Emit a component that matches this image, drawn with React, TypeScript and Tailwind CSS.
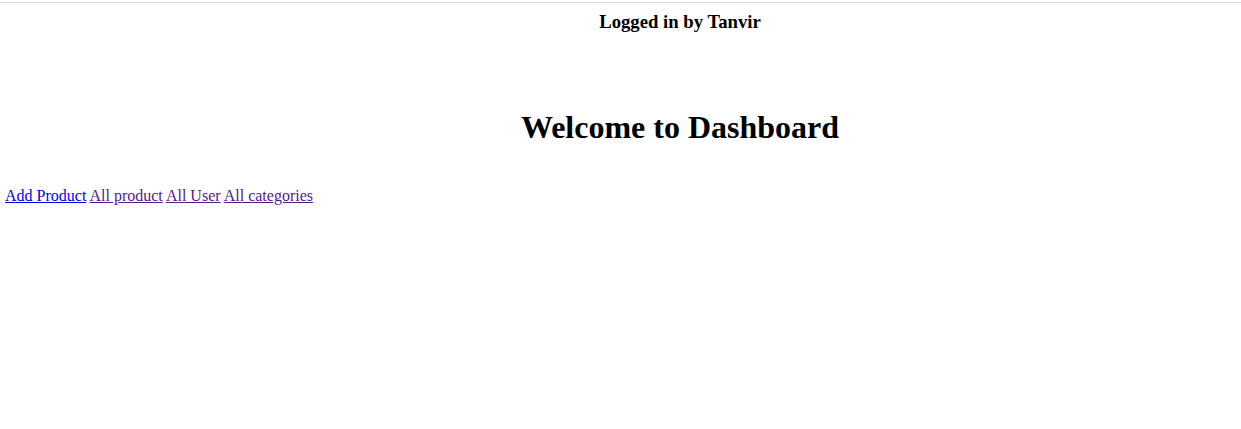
const links = [
    { label: 'Add Product', visited: false },
    { label: 'All product', visited: true },
    { label: 'All User', visited: true },
    { label: 'All categories', visited: true },
];

export default function App() {
    return (
        <div className="min-h-[429px] bg-white font-['Liberation_Serif',serif] text-black">
            <div className="pt-[2px]">
                <div className="border-t border-[#dddddd]" />
            </div>
            <div className="pl-[119px] pt-[8px] text-center">
                <h3 className="text-[18.72px] font-bold leading-[22px]">
                    Logged in by Tanvir
                </h3>
            </div>
            <div className="pl-[119px] pt-[76px] text-center">
                <h1 className="text-[32px] font-bold leading-[37px]">
                    Welcome to Dashboard
                </h1>
            </div>
            <nav className="px-[5px] pt-[41px] text-[16px] leading-[18px]">
                {links.map((l, i) => (
                    <span key={l.label}>
                        {i > 0 && ' '}
                        <a
                            href="#"
                            className={
                                l.visited
                                    ? 'text-[#551a8b] underline'
                                    : 'text-[#0000ee] underline'
                            }
                        >
                            {l.label}
                        </a>
                    </span>
                ))}
            </nav>
        </div>
    );
}
